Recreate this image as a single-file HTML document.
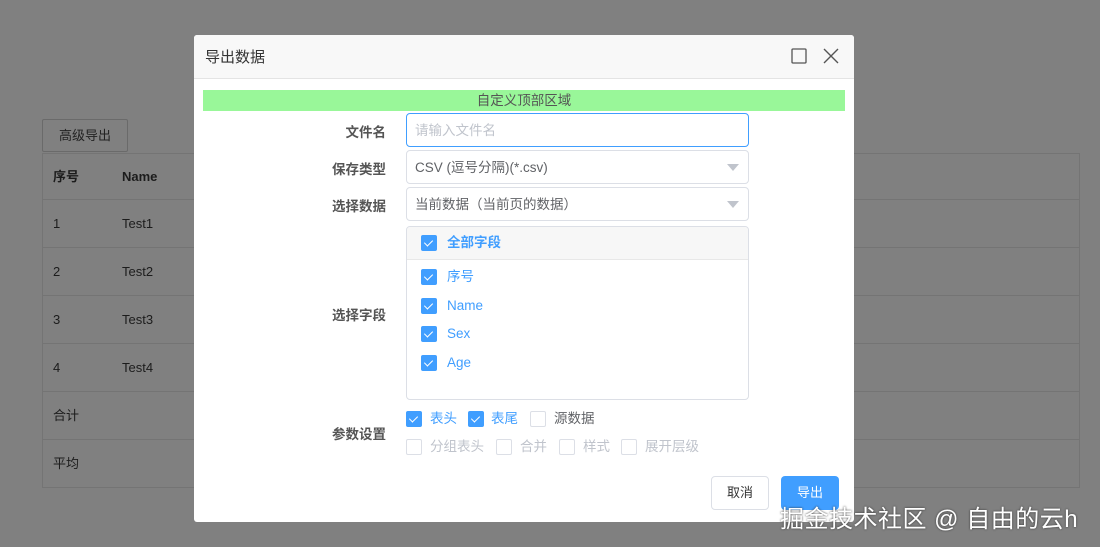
<!DOCTYPE html>
<html><head><meta charset="utf-8"><style>
*{box-sizing:border-box;margin:0;padding:0}
body{width:1100px;height:547px;background:#808080;font-family:"Liberation Sans","Noto Sans CJK SC",sans-serif;font-size:13px;position:relative;overflow:hidden;color:#606266}
.a{position:absolute}
.btn0{left:42px;top:119px;width:86px;height:33px;border:1px solid #6a6a6a;border-radius:2px;color:#222;text-align:center;line-height:31px;background:#808080}
.tbl{left:42px;top:153px;width:1038px;height:335px;border:1px solid #747474}
.row{position:absolute;left:0;width:100%;border-bottom:1px solid #747474;height:48px;line-height:47px;color:#1c1c1c}
.dlg{left:194px;top:35px;width:660px;height:487px;background:#fff;border-radius:3px;overflow:hidden}
.hd{height:44px;background:#f8f8f8;border-bottom:1px solid #e4e4e4;font-size:15px;color:#333;line-height:45px;padding-left:11px}
.lbl{position:absolute;right:468px;color:#555;font-weight:bold;font-size:13.5px}
.inp{position:absolute;left:212px;width:343px;height:34px;border:1px solid #dcdfe6;border-radius:4px;padding-left:8px;line-height:34px;color:#606266;font-size:13.5px}
.arr{position:absolute;right:9px;top:13px;border:6px solid transparent;border-top:7px solid #c0c4cc}
.cb{position:absolute;width:16px;height:16px;border-radius:2px;background:#409eff}
.cb:after{content:"";position:absolute;left:5px;top:2.5px;width:4px;height:7px;border:solid #fff;border-width:0 1.5px 1.5px 0;transform:rotate(45deg)}
.cbo{position:absolute;width:16px;height:16px;border-radius:2px;border:1px solid #dcdfe6;background:#fff}
.ct{position:absolute;color:#409eff;font-size:13.5px;line-height:16px}
</style></head><body>
<div class="a btn0">高级导出</div>
<div class="a tbl">
<div class="row" style="top:0;height:46px;line-height:45px;font-weight:bold"><span class="a" style="left:10px">序号</span><span class="a" style="left:79px">Name</span></div>
<div class="row" style="top:46px"><span class="a" style="left:10px">1</span><span class="a" style="left:79px">Test1</span></div>
<div class="row" style="top:94px"><span class="a" style="left:10px">2</span><span class="a" style="left:79px">Test2</span></div>
<div class="row" style="top:142px"><span class="a" style="left:10px">3</span><span class="a" style="left:79px">Test3</span></div>
<div class="row" style="top:190px"><span class="a" style="left:10px">4</span><span class="a" style="left:79px">Test4</span></div>
<div class="row" style="top:238px"><span class="a" style="left:10px">合计</span></div>
<div class="row" style="top:286px;border:0"><span class="a" style="left:10px">平均</span></div>
</div>
<div class="a dlg">
<div class="hd">导出数据</div>
<svg class="a" style="left:597px;top:13px" width="16" height="16"><rect x="1" y="1" width="14" height="14" rx="1" fill="none" stroke="#555" stroke-width="1.3"/></svg>
<svg class="a" style="left:629px;top:13px" width="16" height="16"><path d="M1 1L15 15M15 1L1 15" stroke="#555" stroke-width="1.4"/></svg>
<div class="a" style="left:9px;top:55px;width:642px;height:21px;background:#99f799;text-align:center;line-height:21px;color:#555;font-size:13.5px">自定义顶部区域</div>
<div class="lbl" style="top:86px">文件名</div>
<div class="inp" style="top:78px;border-color:#409eff;color:#c0c4cc">请输入文件名</div>
<div class="lbl" style="top:123px">保存类型</div>
<div class="inp" style="top:115px">CSV (逗号分隔)(*.csv)<div class="arr"></div></div>
<div class="lbl" style="top:160px">选择数据</div>
<div class="inp" style="top:152px">当前数据（当前页的数据）<div class="arr"></div></div>
<div class="lbl" style="top:269px">选择字段</div>
<div class="a" style="left:212px;top:191px;width:343px;height:174px;border:1px solid #dcdfe6;border-radius:4px;overflow:hidden">
<div style="height:33px;background:#f7f7f7;border-bottom:1px solid #e8e8e8"></div>
<div class="cb" style="left:14px;top:8px"></div><div class="ct" style="left:40px;top:8px;font-weight:bold">全部字段</div>
<div class="cb" style="left:14px;top:42px"></div><div class="ct" style="left:40px;top:42px">序号</div>
<div class="cb" style="left:14px;top:71px"></div><div class="ct" style="left:40px;top:71px">Name</div>
<div class="cb" style="left:14px;top:99px"></div><div class="ct" style="left:40px;top:99px">Sex</div>
<div class="cb" style="left:14px;top:128px"></div><div class="ct" style="left:40px;top:128px">Age</div>
</div>
<div class="lbl" style="top:388px">参数设置</div>
<div class="cb" style="left:212px;top:376px"></div><div class="ct" style="left:236px;top:376px">表头</div>
<div class="cb" style="left:274px;top:376px"></div><div class="ct" style="left:297px;top:376px">表尾</div>
<div class="cbo" style="left:336px;top:376px"></div><div class="ct" style="left:360px;top:376px;color:#606266">源数据</div>
<div class="cbo" style="left:212px;top:404px"></div><div class="ct" style="left:236px;top:404px;color:#c0c4cc">分组表头</div>
<div class="cbo" style="left:302px;top:404px"></div><div class="ct" style="left:326px;top:404px;color:#c0c4cc">合并</div>
<div class="cbo" style="left:365px;top:404px"></div><div class="ct" style="left:389px;top:404px;color:#c0c4cc">样式</div>
<div class="cbo" style="left:427px;top:404px"></div><div class="ct" style="left:451px;top:404px;color:#c0c4cc">展开层级</div>
<div class="a" style="left:517px;top:441px;width:58px;height:34px;border:1px solid #dcdfe6;border-radius:4px;text-align:center;line-height:32px;color:#333">取消</div>
<div class="a" style="left:587px;top:441px;width:58px;height:34px;background:#409eff;border-radius:4px;text-align:center;line-height:34px;color:#fff">导出</div>
</div>
<div class="a" style="left:780px;top:499px;font-size:24px;letter-spacing:0.5px;color:#fff;text-shadow:0 0 2px #333">掘金技术社区 @ 自由的云h</div>
</body></html>
